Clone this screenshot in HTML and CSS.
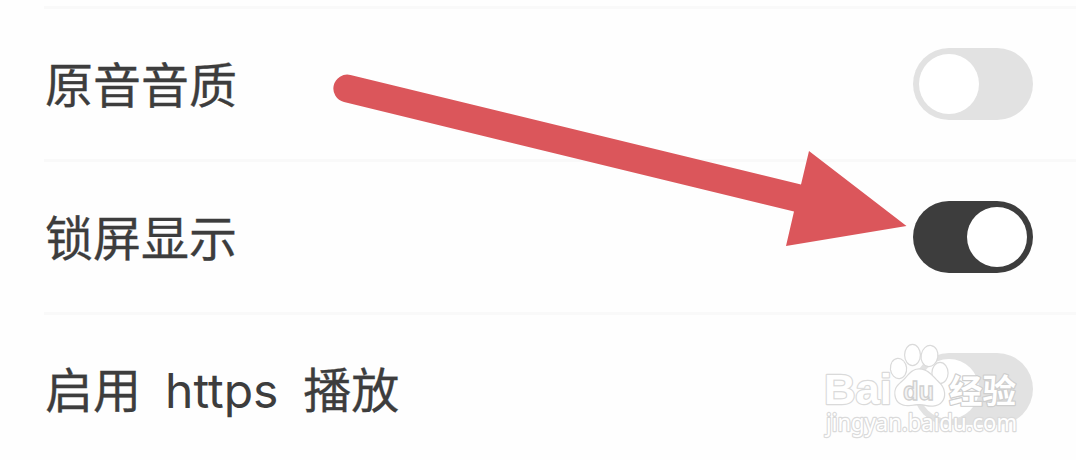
FILE: index.html
```
<!DOCTYPE html>
<html lang="zh-CN">
<head>
    <meta charset="UTF-8">
    <meta name="viewport" content="width=device-width, initial-scale=1.0">
    <title>设置</title>
    <link rel="stylesheet" href="styles.css">
</head>
<body>
    <div class="settings">
        <div class="row">
            <span class="label">原音音质</span>
            <div class="switch"></div>
        </div>
        <div class="row">
            <span class="label">锁屏显示</span>
            <div class="switch on"></div>
        </div>
        <div class="row">
            <span class="label">启用<span class="latin">https</span>播放</span>
            <div class="switch"></div>
        </div>
    </div>
    <svg class="arrow" viewBox="0 0 1076 460">
        <path d="M350.5 75 L801 184.5 L809 151 L906.5 226 L786 246 L794 211.5 L344 102 A13.8 13.8 0 0 1 350.5 75 Z"/>
    </svg>
    <svg class="watermark" viewBox="810 330 240 120">
        <g class="mark">
            <text class="brand" x="824" y="404" textLength="68" lengthAdjust="spacingAndGlyphs">Bai</text>
            <ellipse cx="898.5" cy="368.5" rx="7.5" ry="9.5" transform="rotate(-6 898.5 368.5)"/>
            <ellipse cx="912.5" cy="355" rx="7.3" ry="10"/>
            <ellipse cx="929.5" cy="356" rx="7.8" ry="10" transform="rotate(10 929.5 356)"/>
            <ellipse cx="940" cy="373" rx="7.5" ry="10"/>
            <path d="M919 369.500 C911 369.500 908 377 902 382 C896 387 895 390 895.500 395 C896.500 403 903 405.500 909 405 C914 404.500 916 404 920 404 C924 404 928 406 933 405.500 C941 405 944.500 399 944 393 C943.500 387 940 384 936 380 C931 375 927 369.500 919 369.500 Z"/>
            <text class="cjk" x="949" y="402.500" textLength="67" lengthAdjust="spacingAndGlyphs">经验</text>
            <text class="site" x="826" y="430.500" textLength="191" lengthAdjust="spacingAndGlyphs">jingyan.baidu.com</text>
        </g>
        <text class="du" x="903" y="400" textLength="31" lengthAdjust="spacingAndGlyphs">du</text>
    </svg>
</body>
</html>
```
FILE: styles.css
```
body {
    margin: 0;
    background-color: #fefefe;
    color: #3d3d3d;
    font-family: "Noto Sans CJK SC", sans-serif;
    height: 460px;
    overflow: hidden;
    position: relative;
}
.settings {
    padding: 6px 0 0 44px;
}
.row {
    display: flex;
    align-items: center;
    justify-content: space-between;
    box-sizing: border-box;
    height: 152.76px;
    padding-right: 43px;
    border-top: 3px solid #f9f9f9;
}
.label {
    font-size: 48px;
    line-height: 72px;
    padding: 0 0 4px 1px;
    white-space: nowrap;
    -webkit-text-stroke: 0.3px #3d3d3d;
}
.latin {
    font-family: Inter, sans-serif;
    line-height: 1;
    margin: 0 25px 0 24px;
    -webkit-text-stroke: 0;
}
.switch {
    box-sizing: border-box;
    width: 120px;
    height: 72px;
    padding: 6px;
    border-radius: 36px;
    background-color: #e2e2e2;
    display: flex;
}
.switch::before {
    content: '';
    width: 60px;
    height: 60px;
    border-radius: 50%;
    background-color: #ffffff;
}
.switch.on {
    background-color: #3d3d3d;
    justify-content: flex-end;
}
/* overlays on top of the list */
.arrow {
    position: absolute;
    top: 0;
    left: 0;
    width: 1076px;
    height: 460px;
    fill: #db565b;
}
.watermark {
    position: absolute;
    top: 330px;
    left: 810px;
    width: 240px;
    height: 120px;
}
.mark {
    fill: #ffffff;
    stroke: #dadada;
    stroke-width: 2.4px;
    stroke-linejoin: round;
    paint-order: stroke;
}
.brand {
    font: bold 43px "Liberation Sans", sans-serif;
}
.cjk {
    font: bold 33px "Noto Sans CJK SC", sans-serif;
    stroke: #cecece;
}
.site {
    font: 23px "Noto Sans", sans-serif;
}
.du {
    font: bold 25px "Liberation Sans", sans-serif;
    fill: #f4f4f4;
    stroke: #d0d0d0;
    stroke-width: 1.3px;
}
```
